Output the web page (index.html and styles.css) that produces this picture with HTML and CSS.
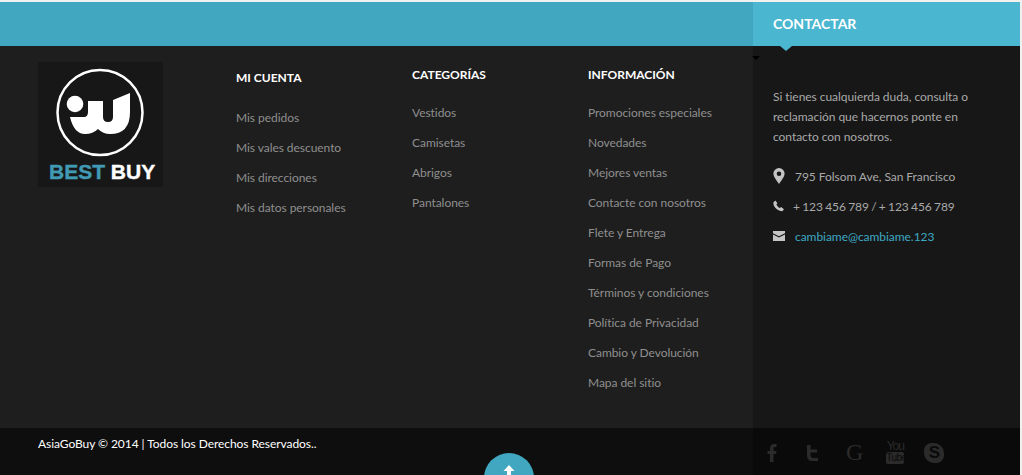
FILE: index.html
```html
<!DOCTYPE html>
<html lang="en">
<head>
    <meta charset="UTF-8">
    <title>Best Buy Footer</title>
    <link rel="stylesheet" href="styles.css">
</head>
<body>
    <div class="page">
        <div class="left">
            <div class="bar"></div>
            <div class="main">
                <svg class="logo" width="125" height="125" viewBox="0 0 125 125">
                    <rect width="125" height="125" fill="#171717"/>
                    <circle cx="62" cy="50.500" r="42.500" fill="none" stroke="#fff" stroke-width="2.500"/>
                    <circle cx="37" cy="42" r="8.300" fill="#fff"/>
                    <path d="M32 55 L46 55 Q50 55 50 50 L50 39 L65 39 L65 55 Q65 60 70 60 Q75 60 75 55 L75 38 L92 31 L92 50 Q92 72 72 72 Q65 72 60 67 Q55 72 47 72 Q36 72 32 55 Z" fill="#fff"/>
                    <text x="11" y="117" class="logo-text"><tspan fill="#419ab3" stroke="#419ab3">BEST</tspan> <tspan fill="#fff" stroke="#fff">BUY</tspan></text>
                </svg>
                <div class="col col-first">
                    <h4>Mi cuenta</h4>
                    <ul>
                        <li>Mis pedidos</li>
                        <li>Mis vales descuento</li>
                        <li>Mis direcciones</li>
                        <li>Mis datos personales</li>
                    </ul>
                </div>
                <div class="col">
                    <h4>Categorías</h4>
                    <ul>
                        <li>Vestidos</li>
                        <li>Camisetas</li>
                        <li>Abrigos</li>
                        <li>Pantalones</li>
                    </ul>
                </div>
                <div class="col">
                    <h4>Información</h4>
                    <ul>
                        <li>Promociones especiales</li>
                        <li>Novedades</li>
                        <li>Mejores ventas</li>
                        <li>Contacte con nosotros</li>
                        <li>Flete y Entrega</li>
                        <li>Formas de Pago</li>
                        <li>Términos y condiciones</li>
                        <li>Política de Privacidad</li>
                        <li>Cambio y Devolución</li>
                        <li>Mapa del sitio</li>
                    </ul>
                </div>
            </div>
            <div class="copy">AsiaGoBuy © 2014 | Todos los Derechos Reservados..</div>
        </div>

        <div class="right">
            <div class="contact-head">Contactar</div>
            <div class="contact-body">
                <p>Si tienes cualquierda duda, consulta o reclamación que hacernos ponte en contacto con nosotros.</p>
                <div class="contact-row">
                    <svg class="ico ico-pin" width="12" height="16" viewBox="0 0 12 16"><path fill-rule="evenodd" d="M6 0a5.600 5.600 0 0 1 5.600 5.600C11.600 9 8 13 6 16 4 13 .4 9 .4 5.600A5.600 5.600 0 0 1 6 0Zm0 3.400a2.300 2.300 0 1 0 0 4.600 2.300 2.300 0 0 0 0-4.600Z" fill="#c4c4c4"/></svg>
                    <span>795 Folsom Ave, San Francisco</span>
                </div>
                <div class="contact-row row-phone">
                    <svg class="ico ico-phone" width="12" height="12" viewBox="0 0 12 12"><path d="M.5 2.200 2.400.4l2 2.900-1 1.200c.6 1.500 1.900 2.900 3.500 3.600l1.200-1 2.900 2.100-1.700 2C4.900 11.200-.4 6.400.5 2.200Z" fill="#c4c4c4"/></svg>
                    <span>+ 123 456 789 / + 123 456 789</span>
                </div>
                <div class="contact-row">
                    <svg class="ico" width="12" height="10" viewBox="0 0 12 10"><path d="M0 0h12v2.200L6 5.200 0 2.200Z" fill="#c4c4c4"/><path d="M0 3.500l6 3 6-3V10H0Z" fill="#c4c4c4"/></svg>
                    <span class="mail">cambiame@cambiame.123</span>
                </div>
            </div>
            <div class="social">
                <svg width="10" height="18" viewBox="0 0 10 18"><path d="M3 18V10H.5V7H3V4.500C3 1.500 4.500 0 7 0h2.500v3H8C6.900 3 6.500 3.500 6.500 4.500V7h3L9 10H6.500v8Z" fill="#2b2b2b"/></svg>
                <svg class="s-tw" width="11" height="16" viewBox="0 0 11 16"><path d="M0 0h3.500v4.500H10v3H3.500V10c0 2 1 3 3 3H11v3H6C2 16 0 14 0 10Z" fill="#2b2b2b"/></svg>
                <span class="s-g">G</span>
                <span class="s-yt"><span class="yt-you">You</span><span class="yt-tube">Tube</span></span>
                <span class="s-skype">S</span>
            </div>
        </div>
        <div class="arrow-down"></div>
        <div class="to-top">
            <svg width="12" height="12" viewBox="0 0 12 12"><path d="M6 0 11.500 6H8V12H4V6H.5Z" fill="#fff"/></svg>
        </div>
    </div>
</body>
</html>
```

FILE: styles.css
```css
* {
    margin: 0;
    padding: 0;
    box-sizing: border-box;
}

html, body {
    height: 100%;
    overflow: hidden;
}

body {
    font-family: Lato, 'Open Sans', sans-serif;
    font-size: 12px;
    background-color: #f1f1ef;
    padding: 2px 2px 0 0;
}

.page {
    position: relative;
    display: flex;
    height: 473px;
    overflow: hidden;
}

.left {
    width: 753px;
    display: flex;
    flex-direction: column;
    background-color: #1e1e1e;
}

.bar {
    height: 44px;
    background-color: #41a7c0;
}

.main {
    flex: 1;
    display: grid;
    grid-template-columns: 198px 176px 176px 176px;
    padding: 16px 0 0 38px;
}

.logo {
    display: block;
}

.logo-text {
    font-family: 'Liberation Sans', sans-serif;
    font-size: 21px;
    font-weight: bold;
    stroke-width: 0.4;
}

.col h4 {
    font-size: 12px;
    font-weight: bold;
    line-height: 26px;
    color: #fff;
    text-transform: uppercase;
    margin-bottom: 10px;
}

.col ul {
    list-style: none;
}

.col li {
    line-height: 30px;
    letter-spacing: -0.05px;
    color: #8f8f8f;
}

.col-first {
    padding-top: 3px;
}

.col-first h4 {
    margin-bottom: 12px;
}

.copy {
    height: 47px;
    padding: 8px 0 0 38px;
    line-height: 16px;
    letter-spacing: -0.06px;
    color: #fff;
    background-color: #0e0e0e;
}

.right {
    width: 267px;
    display: flex;
    flex-direction: column;
    background-color: #171717;
}

.contact-head {
    position: relative;
    height: 44px;
    padding-left: 20px;
    font-size: 14px;
    font-weight: bold;
    line-height: 44px;
    color: #fff;
    text-transform: uppercase;
    background-color: #4ab6cf;
}

/* little notch under the heading */
.contact-head::after {
    content: "";
    position: absolute;
    left: 27px;
    top: 44px;
    border-left: 6px solid transparent;
    border-right: 6px solid transparent;
    border-top: 5px solid #4ab6cf;
}

.contact-body {
    flex: 1;
    padding: 41px 20px 0;
    letter-spacing: -0.05px;
    color: #a9a9a9;
}

.contact-body p {
    line-height: 20px;
    margin-bottom: 14px;
}

.contact-row {
    display: flex;
    align-items: center;
    height: 30px;
}

.ico {
    width: 12px;
    margin-right: 10px;
    flex-shrink: 0;
}

.ico-pin {
    height: 16px;
}

.row-phone {
    word-spacing: -0.75px;
}

.row-phone .ico {
    margin-right: 8px;
}

.mail {
    color: #3ea9c4;
}

.social {
    height: 47px;
    display: flex;
    align-items: center;
    padding: 2px 0 0 14px;
    background-color: #0a0a0a;
}

.s-tw {
    margin-left: 30px;
}

.s-g {
    margin-left: 28px;
    font-family: 'Liberation Serif', serif;
    font-size: 24px;
    color: #2b2b2b;
}

.s-yt {
    margin-left: 23px;
    display: flex;
    flex-direction: column;
    align-items: center;
    width: 18px;
    font-family: 'Liberation Sans', sans-serif;
    font-size: 12px;
    letter-spacing: -1px;
    line-height: 11px;
    color: #2b2b2b;
}

.yt-tube {
    width: 18px;
    font-size: 10px;
    letter-spacing: -0.6px;
    text-align: center;
    border-radius: 2px;
    color: #0a0a0a;
    background-color: #2b2b2b;
    line-height: 12px;
}

.s-skype {
    margin-left: 20px;
    width: 20px;
    height: 20px;
    border-radius: 38% 50% 38% 50%;
    font-family: 'Liberation Sans', sans-serif;
    font-size: 17px;
    font-weight: bold;
    line-height: 20px;
    text-align: center;
    color: #0a0a0a;
    background-color: #2b2b2b;
}

.arrow-down {
    position: absolute;
    left: 752px;
    top: 54px;
    border-left: 4px solid transparent;
    border-right: 4px solid transparent;
    border-top: 4px solid #000;
}

.to-top {
    position: absolute;
    left: 484px;
    top: 451px;
    width: 50px;
    height: 50px;
    border-radius: 50%;
    padding-top: 12px;
    text-align: center;
    background-color: #41a7c0;
}
```
